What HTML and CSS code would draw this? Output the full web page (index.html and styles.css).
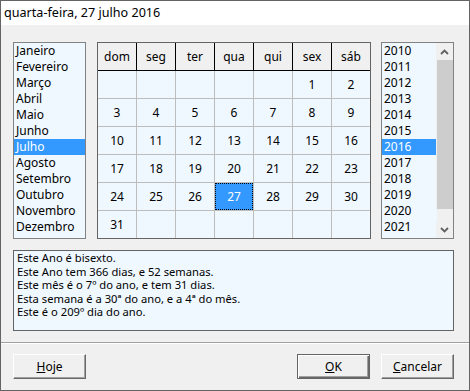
FILE: index.html
```html
<!DOCTYPE html>
<html lang="pt">
<head>
    <meta charset="utf-8" />
    <title>Calendário</title>
    <link rel="stylesheet" href="styles.css">
</head>
<body>
    <div class="dialog">
        <div class="titlebar">quarta-feira, 27 julho 2016</div>

        <div class="content">
            <div class="pickers">
                <!-- month list -->
                <ul class="listbox months">
                    <li>Janeiro</li>
                    <li>Fevereiro</li>
                    <li>Março</li>
                    <li>Abril</li>
                    <li>Maio</li>
                    <li>Junho</li>
                    <li class="selected">Julho</li>
                    <li>Agosto</li>
                    <li>Setembro</li>
                    <li>Outubro</li>
                    <li>Novembro</li>
                    <li>Dezembro</li>
                </ul>

                <!-- day grid -->
                <div class="calendar">
                    <div class="cal-head">
                        <div>dom</div><div>seg</div><div>ter</div><div>qua</div><div>qui</div><div>sex</div><div>sáb</div>
                    </div>
                    <div class="cal-body">
                        <div></div><div></div><div></div><div></div><div></div><div>1</div><div>2</div>
                        <div>3</div><div>4</div><div>5</div><div>6</div><div>7</div><div>8</div><div>9</div>
                        <div>10</div><div>11</div><div>12</div><div>13</div><div>14</div><div>15</div><div>16</div>
                        <div>17</div><div>18</div><div>19</div><div>20</div><div>21</div><div>22</div><div>23</div>
                        <div>24</div><div>25</div><div>26</div><div class="today">27</div><div>28</div><div>29</div><div>30</div>
                        <div>31</div><div></div><div></div><div></div><div></div><div></div><div></div>
                    </div>
                </div>

                <!-- year list with scrollbar -->
                <div class="listbox years">
                    <ul>
                        <li>2010</li>
                        <li>2011</li>
                        <li>2012</li>
                        <li>2013</li>
                        <li>2014</li>
                        <li>2015</li>
                        <li class="selected">2016</li>
                        <li>2017</li>
                        <li>2018</li>
                        <li>2019</li>
                        <li>2020</li>
                        <li>2021</li>
                    </ul>
                    <div class="scrollbar">
                        <div class="arrow">
                            <svg width="9" height="6" viewBox="0 0 9 6"><polyline points="1,5 4.5,1.5 8,5" fill="none" stroke="#606060" stroke-width="1.8" /></svg>
                        </div>
                        <div class="thumb"></div>
                        <div class="track"></div>
                        <div class="arrow">
                            <svg width="9" height="6" viewBox="0 0 9 6"><polyline points="1,1 4.5,4.5 8,1" fill="none" stroke="#606060" stroke-width="1.8" /></svg>
                        </div>
                    </div>
                </div>
            </div>

            <div class="info">
                <p>Este Ano é bisexto.</p>
                <p>Este Ano tem 366 dias, e 52 semanas.</p>
                <p>Este mês é o 7º do ano, e tem 31 dias.</p>
                <p>Esta semana é a 30ª do ano, e a 4ª do mês.</p>
                <p>Este é o 209º dia do ano.</p>
            </div>
        </div>

        <div class="separator"></div>

        <div class="buttons">
            <button class="btn"><u>H</u>oje</button>
            <span class="spacer"></span>
            <button class="btn default"><u>O</u>K</button>
            <button class="btn"><u>C</u>ancelar</button>
        </div>
    </div>
</body>
</html>
```

FILE: styles.css
```css
/* Global */
body {
    margin: 0;
    font-family: "Noto Sans", "DejaVu Sans", sans-serif;
    font-size: 12px;
    color: #000;
}

/* Window frame */
.dialog {
    box-sizing: border-box;
    width: 470px;
    height: 391px;
    border: 1px solid #646464;
    background-color: #f0f0f0;
}

.titlebar {
    height: 24px;
    line-height: 24px;
    padding-left: 3px;
    background-color: #fff;
    font-size: 12.6px;
}

.content {
    padding: 17px 15px 0 12px;
}

/* Top row: months, days, years */
.pickers {
    display: flex;
    height: 197px;
}

.listbox {
    box-sizing: border-box;
    width: 73px;
    height: 197px;
    margin: 0;
    padding: 0;
    list-style: none;
    border: 1px solid #828282;
    background-color: #f0f8ff;
}

.listbox li {
    height: 16px;
    line-height: 16px;
    padding-left: 2px;
    white-space: nowrap;
}

.listbox li.selected {
    background-color: #3399ff;
    color: #fff;
}

.months {
    margin-right: 11px;
}

/* Calendar grid */
.calendar {
    box-sizing: border-box;
    width: 274px;
    height: 197px;
    border: 1px solid #646464;
    margin-right: 10px;
}

.cal-head, .cal-body {
    display: grid;
    grid-template-columns: repeat(7, 38px);
    gap: 1px;
}

.cal-head {
    background-color: #000;
    border-bottom: 1px solid #000;
}

.cal-body {
    grid-auto-rows: 27px;
    background-color: #bdbdbd;
}

.cal-head div, .cal-body div {
    display: flex;
    align-items: center;
    justify-content: center;
    height: 27px;
}

.cal-head div {
    background-color: #f0f0f0;
}

.cal-body div {
    background-color: #f0f8ff;
}

.cal-body div.today {
    background-color: #3399ff;
    color: #fff;
    outline: 1px dotted #000;
    outline-offset: -1px;
}

/* Year list */
.years {
    display: flex;
}

.years ul {
    width: 54px;
    margin: 0;
    padding: 0;
    list-style: none;
}

.scrollbar {
    display: flex;
    flex-direction: column;
    width: 17px;
    background-color: #f0f0f0;
}

.scrollbar .arrow {
    display: flex;
    align-items: center;
    justify-content: center;
    height: 17px;
}

.scrollbar .thumb {
    height: 149px;
    margin-left: 1px;
    background-color: #cdcdcd;
}

.scrollbar .track {
    flex: 1;
    border-left: 1px solid #f0f8ff;
}

/* Info box */
.info {
    box-sizing: border-box;
    height: 81px;
    margin-top: 11px;
    padding: 0 3px;
    border: 1px solid #646464;
    background-color: #f0f8ff;
    font-size: 11.2px;
    line-height: 13.5px;
}

.info p {
    margin: 0;
}

/* Etched line */
.separator {
    margin-top: 11px;
    border-top: 1px solid #a0a0a0;
    border-bottom: 1px solid #fff;
}

/* Bottom buttons */
.buttons {
    display: flex;
    gap: 11px;
    padding: 10px 15px 0 12px;
}

.spacer {
    flex: 1;
}

.btn {
    box-sizing: border-box;
    width: 73px;
    height: 25px;
    padding: 0;
    font-family: inherit;
    font-size: 12px;
    color: #000;
    background-color: #f0f0f0;
    border: 1px solid;
    border-color: #fff #696969 #696969 #fff;
    box-shadow: inset -1px -1px #a0a0a0;
}

.btn.default {
    border-color: #646464;
    box-shadow: inset 1px 1px #fff, inset -1px -1px #696969, inset -2px -2px #a0a0a0;
}
```
